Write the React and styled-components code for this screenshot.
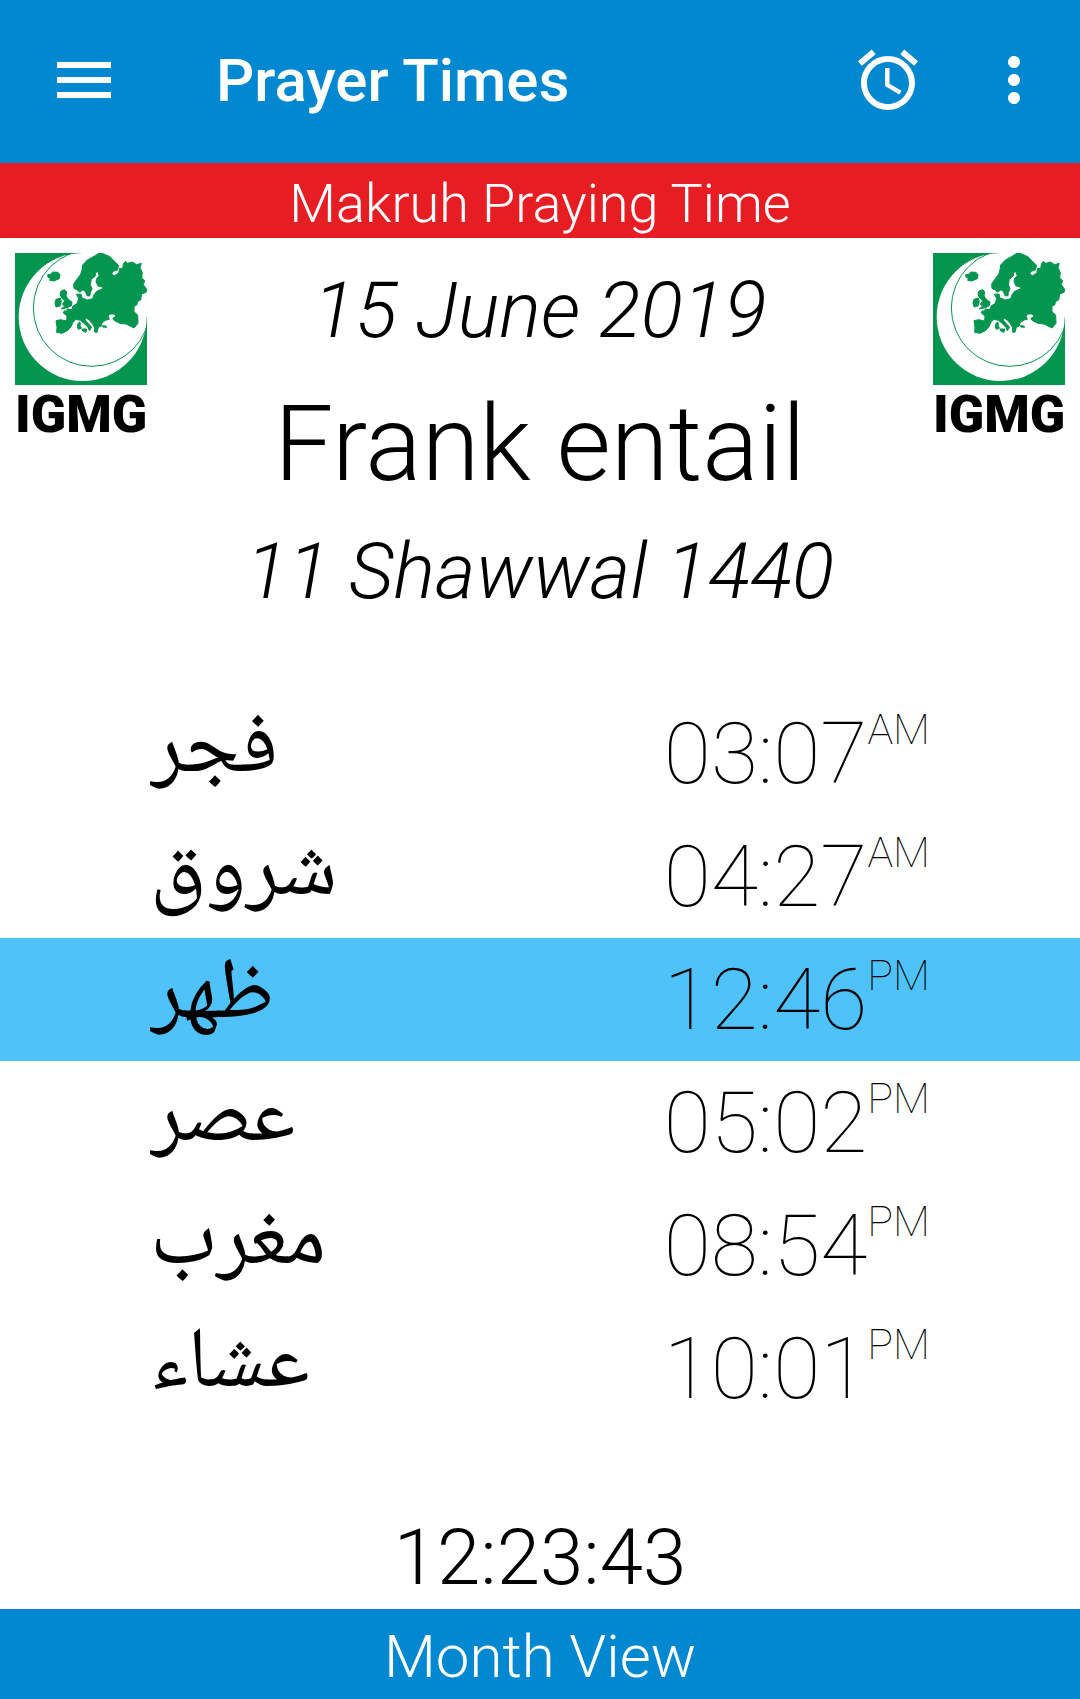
import React from "react";
import styled, { createGlobalStyle } from "styled-components";
import { MdAccessAlarm, MdMenu, MdMoreVert } from "react-icons/md";

const GlobalStyle = createGlobalStyle`
  *, *::before, *::after { box-sizing: border-box; }
  body {
    margin: 0;
    background: #fff;
    color: #000;
    font-family: Roboto, "Liberation Sans", sans-serif;
  }
`;

const Screen = styled.div`
  display: flex;
  flex-direction: column;
  min-height: 100vh;
`;

const Toolbar = styled.header`
  display: flex;
  align-items: center;
  height: 163px;
  padding: 0 30px 4px 48px;
  background: #0288d1;
  color: #fff;
`;

const Title = styled.h1`
  flex: 1;
  margin: 0 0 0 96px;
  padding-top: 3px;
  font-size: 60px;
  font-weight: 500;
  line-height: 72px;
`;

const Actions = styled.div`
  display: flex;
  gap: 54px;
`;

const IconButton = styled.button`
  display: flex;
  padding: 0;
  border: 0;
  background: none;
  color: inherit;
  font-size: 72px;
  cursor: pointer;
`;

const Notice = styled.p`
  margin: 0;
  padding: 7px 0 1px;
  background: #e71d24;
  color: #fff;
  font-size: 54px;
  font-weight: 300;
  line-height: 67px;
  text-align: center;
`;

const Summary = styled.section`
  display: flex;
  justify-content: space-between;
  align-items: flex-start;
  padding: 15px 15px 74px;
`;

const Dates = styled.div`
  flex: 1;
  padding-top: 12px;
  text-align: center;
`;

const DateLine = styled.p`
  margin: 0;
  font-size: 78px;
  font-style: italic;
  font-weight: 300;
  line-height: 92px;
`;

const City = styled.h2`
  margin: 26px 0 19px;
  font-size: 105px;
  font-weight: 300;
  line-height: 124px;
`;

const LogoBox = styled.div`
  display: flex;
  flex-direction: column;
  width: 132px;
`;

const Wordmark = styled.span`
  margin-top: 6px;
  font-size: 52px;
  font-weight: 900;
  line-height: 48px;
  text-align: center;
  white-space: nowrap;
`;

const Times = styled.table`
  width: 100%;
  border-collapse: collapse;
`;

const TimeRow = styled.tr`
  height: 123px;
  background: ${({ $current }) => ($current ? "#4fc3f9" : "transparent")};
`;

const Prayer = styled.th`
  padding: 0 0 2px 150px;
  font-size: 86px;
  font-weight: 400;
  line-height: 121px;
  text-align: left;
`;

const PrayerName = styled.span`
  display: block;
  overflow-x: clip;
  font-family: "Noto Naskh Arabic", "DejaVu Sans", sans-serif;
`;

const Time = styled.td`
  padding: 0 150px 0 0;
  font-size: 86px;
  font-weight: 100;
  line-height: 123px;
  text-align: right;
  white-space: nowrap;
`;

const Period = styled.span`
  font-size: 43px;
  line-height: 0;
  vertical-align: 39px;
`;

const Countdown = styled.p`
  margin: auto 0 0;
  padding-bottom: 5px;
  font-size: 78px;
  font-weight: 300;
  line-height: 92px;
  text-align: center;
`;

const MonthButton = styled.button`
  height: 90px;
  padding: 5px 0 0;
  border: 0;
  background: #0288d1;
  color: #fff;
  font-family: inherit;
  font-size: 60px;
  font-weight: 300;
  line-height: 72px;
  cursor: pointer;
`;

const GREEN = "#04954f";

function Logo() {
  return (
    <LogoBox>
      <svg viewBox="45 39 396 396" width="132" height="132" aria-hidden="true">
        <rect x="45" y="39" width="396" height="396" fill={GREEN} />
        <circle cx="248" cy="231" r="192" fill="#fff" />
        <path d="M248 39H441V231H248Z" fill="#fff" />
        <circle cx="275" cy="204" r="175" fill="none" stroke={GREEN} strokeWidth="3" />
        <path d="M322 39H441V231H400Z" fill="#fff" />
        <g fill={GREEN} stroke={GREEN} strokeWidth="3" strokeLinejoin="round">
          <path d="M305 39L318 45L330 50L345 66L356 76L352 90L340 94L335 101L343 107L357 99L358 85L368 86L370 72L376 64L383 70L397 66L410 74L424 70L420 83L427 98L425 114L434 122L430 134L441 150L438 157L425 162L422 180L413 184L410 195L402 198L402 215L413 225L414 250L402 264L394 260L378 252L360 250L345 243L338 236L348 228L342 222L330 222L324 228L328 238L318 240L306 248L304 258L295 262L291 277L283 276L284 264L278 252L268 240L258 234L255 240L264 250L275 262L268 272L264 262L250 248L241 241L228 238L219 247L212 262L202 272L186 280L170 277L171 262L168 242L182 239L200 243L201 228L190 219L192 213L201 213L201 207L216 209L218 199L232 190L236 175L229 163L243 162L246 174L262 180L278 176L282 164L290 154L308 146L306 140L294 138L288 125L291 114L298 108L293 95L287 97L286 108L274 118L271 134L276 146L271 158L270 167L262 168L255 153L248 150L239 156L230 149L222 145L221 132L232 116L242 103L246 90L248 75L262 60L282 49L298 39Z" />
          <path d="M183 153L193 149L200 155L198 168L206 179L216 186L214 197L202 203L184 207L194 198L187 193L194 183L185 174L180 163Z" />
          <path d="M168 178L181 174L184 185L180 198L168 201L165 189Z" />
          <path d="M143 104L152 103L158 96L174 97L180 104L178 116L161 123L149 121L151 113L144 112Z" />
          <path d="M234 250L240 246L241 257L244 265L235 268L232 260Z" />
          <path d="M246 267L260 267L258 277L248 273Z" />
          <path d="M308 257L318 258L320 262L308 261Z" />
        </g>
      </svg>
      <Wordmark>IGMG</Wordmark>
    </LogoBox>
  );
}

const prayers = [
  { name: "فجر", time: "03:07", period: "AM" },
  { name: "شروق", time: "04:27", period: "AM" },
  { name: "ظهر", time: "12:46", period: "PM", current: true },
  { name: "عصر", time: "05:02", period: "PM" },
  { name: "مغرب", time: "08:54", period: "PM" },
  { name: "عشاء", time: "10:01", period: "PM" },
];

export default function App() {
  return (
    <Screen>
      <GlobalStyle />
      <Toolbar>
        <IconButton type="button" aria-label="Menu">
          <MdMenu />
        </IconButton>
        <Title>Prayer Times</Title>
        <Actions>
          <IconButton type="button" aria-label="Alarms">
            <MdAccessAlarm />
          </IconButton>
          <IconButton type="button" aria-label="More options">
            <MdMoreVert />
          </IconButton>
        </Actions>
      </Toolbar>
      <Notice>Makruh Praying Time</Notice>
      <Summary>
        <Logo />
        <Dates>
          <DateLine>15 June 2019</DateLine>
          <City>Frank entail</City>
          <DateLine>11 Shawwal 1440</DateLine>
        </Dates>
        <Logo />
      </Summary>
      <Times>
        <tbody>
          {prayers.map(({ name, time, period, current }) => (
            <TimeRow key={name} $current={current}>
              <Prayer scope="row">
                <PrayerName lang="ar">{name}</PrayerName>
              </Prayer>
              <Time>
                {time}
                <Period>{period}</Period>
              </Time>
            </TimeRow>
          ))}
        </tbody>
      </Times>
      <Countdown>12:23:43</Countdown>
      <MonthButton type="button">Month View</MonthButton>
    </Screen>
  );
}
